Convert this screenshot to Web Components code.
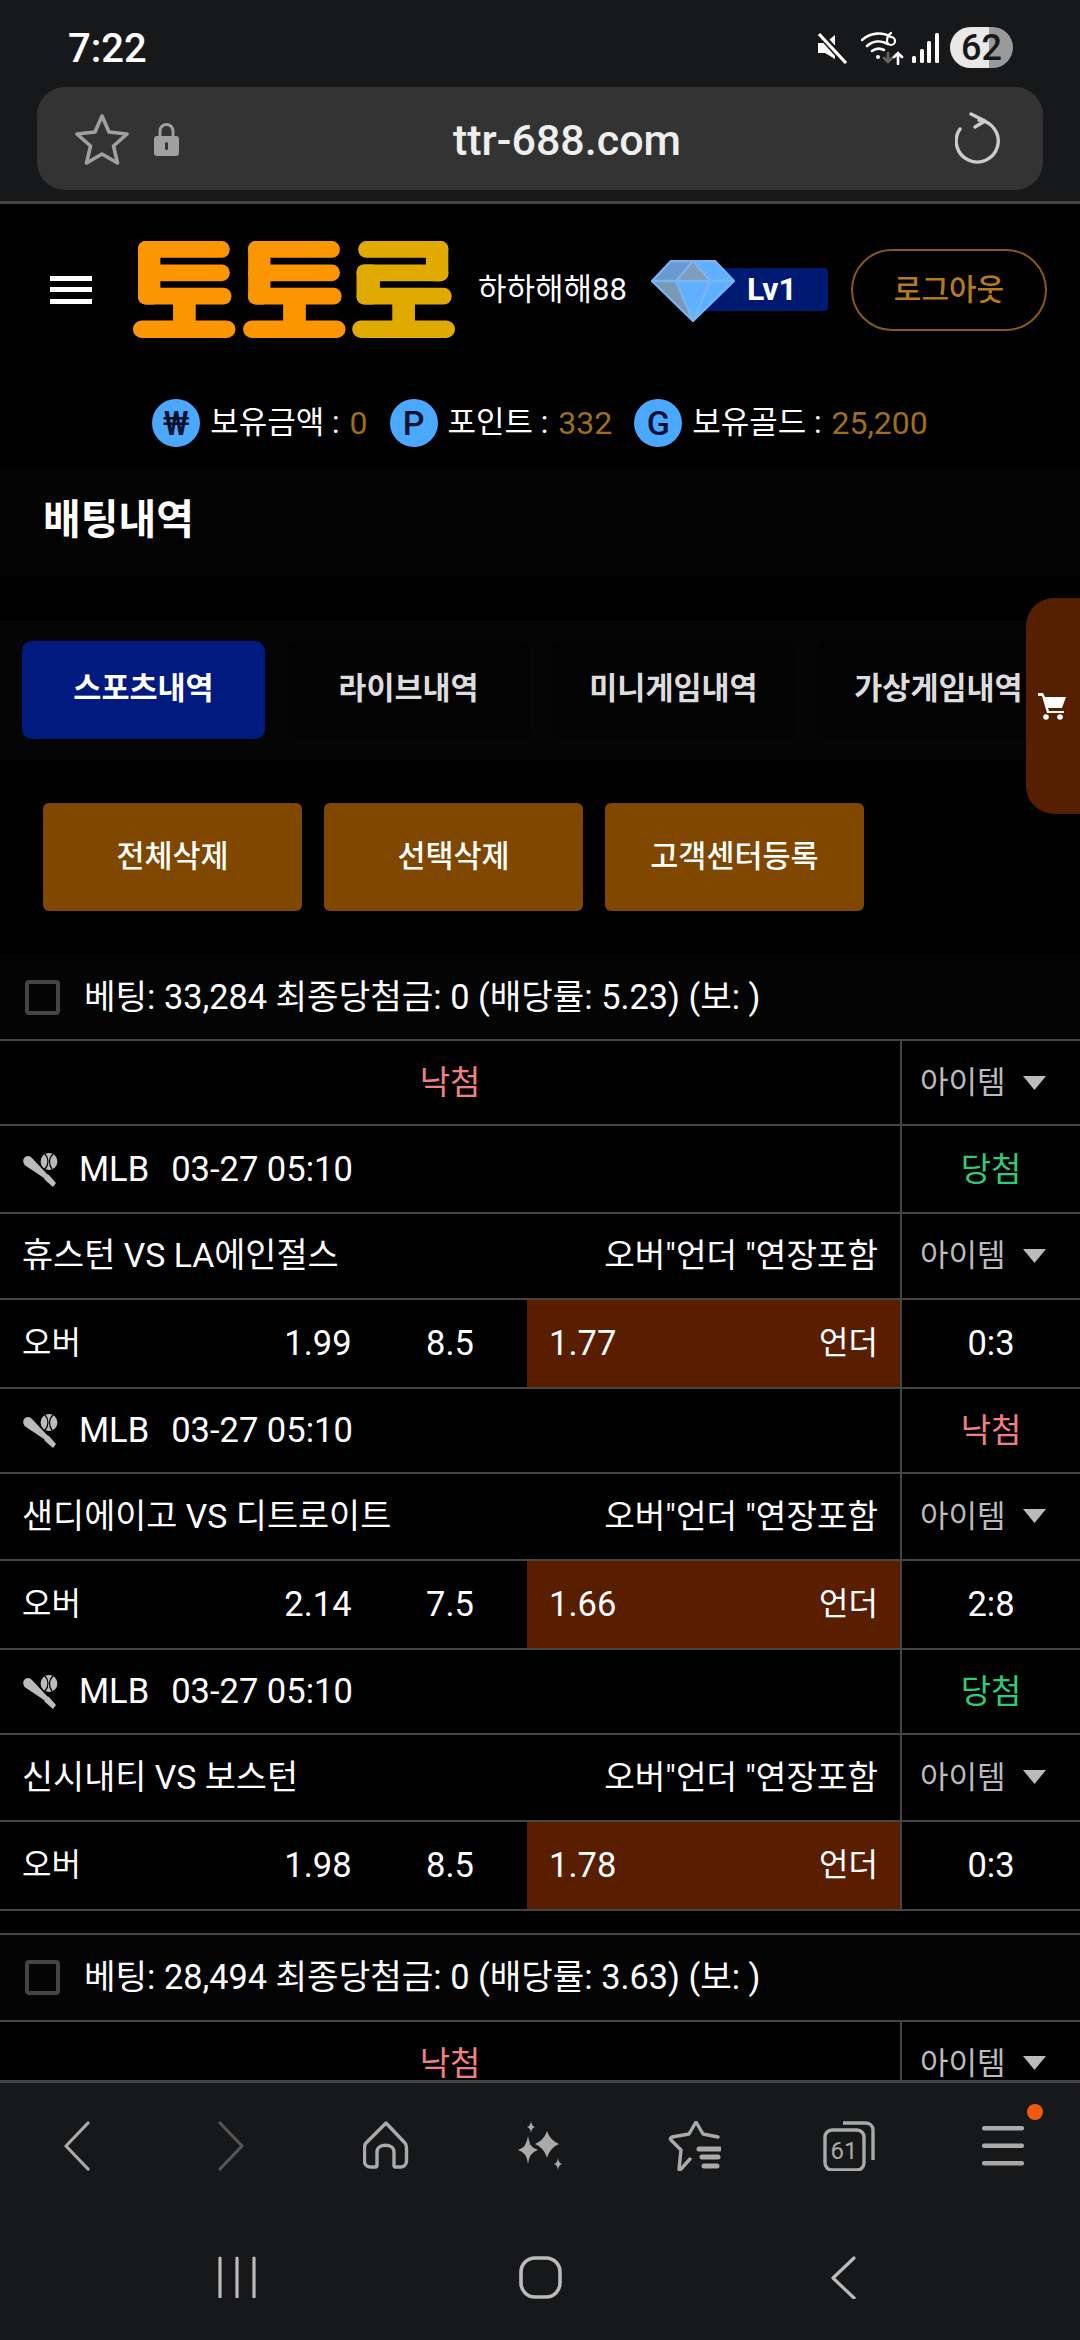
<!DOCTYPE html>
<html lang="ko">
<head>
<meta charset="utf-8">
<title>배팅내역</title>
<style>
  html, body { margin: 0; height: 2340px; overflow: hidden; background: #000; }
  body {
    display: flex;
    flex-direction: column;
    width: 1080px;
    position: relative;
    color: #fff;
    font-family: Roboto, "Noto Sans CJK KR", sans-serif;
  }
  #content { flex: 1; min-height: 0; overflow: hidden; display: block; }
</style>
</head>
<body>
<phone-status></phone-status>
<url-bar></url-bar>
<div id="content">
  <site-header></site-header>
  <balance-row></balance-row>
  <page-title>배팅내역</page-title>
  <tab-row></tab-row>
  <action-row></action-row>
  <bet-summary>베팅: 33,284 최종당첨금: 0 (배당률: 5.23) (보: )</bet-summary>
  <result-row result="낙첨"></result-row>
  <match-block first result="당첨" teams="휴스턴 VS LA에인절스" over="1.99" line="8.5" under="1.77" score="0:3"></match-block>
  <match-block result="낙첨" teams="샌디에이고 VS 디트로이트" over="2.14" line="7.5" under="1.66" score="2:8"></match-block>
  <match-block result="당첨" teams="신시내티 VS 보스턴" over="1.98" line="8.5" under="1.78" score="0:3"></match-block>
  <bet-summary second>베팅: 28,494 최종당첨금: 0 (배당률: 3.63) (보: )</bet-summary>
  <result-row result="낙첨"></result-row>
</div>
<cart-tab></cart-tab>
<browser-nav></browser-nav>
<system-nav></system-nav>

<script>
"use strict";
const KR = 'Roboto, "Noto Sans CJK KR", sans-serif';

class PhoneStatus extends HTMLElement {
  constructor() {
    super();
    this.attachShadow({mode: 'open'}).innerHTML = `
      <style>
        :host { display: flex; align-items: center; height: 87px; box-sizing: border-box; padding: 8px 67px 0 68px; background: #17181a; flex: none; }
        .time { font: 500 40px/1 ${KR}; color: #fff; flex: 1; padding-top: 2px; }
        svg { display: block; flex: none; }
        .battery { width: 63px; height: 41px; border-radius: 21px; margin-left: 11px; display: flex; align-items: center; justify-content: center;
          background: linear-gradient(90deg, #e8e8e8 0 39px, #9a9a9a 39px); color: #17181a; font: 500 36px/1 ${KR}; }
      </style>
      <div class="time">7:22</div>
      <svg width="32" height="32" viewBox="0 0 32 32" style="margin-right:13px">
        <path d="M2 11h7l10-8v24l-10-6H2z" fill="#fff"/>
        <path d="M3 1l27 30" stroke="#17181a" stroke-width="7"/>
        <path d="M3 2l27 29" stroke="#fff" stroke-width="3.2"/>
      </svg>
      <svg width="46" height="34" viewBox="0 0 46 34" fill="none" stroke="#fff" stroke-width="2.6" stroke-linecap="round" style="margin-right:5px">
        <path d="M1 9c9-8 21-8 29-3"/><path d="M6 15c6-5 14-6 21-2"/><path d="M11 20c4-3 8-3 12-1"/>
        <circle cx="17" cy="26" r="2" fill="#fff" stroke="none"/>
        <path d="M30 2c-3 2-4 5-4 8a4 4 0 1 0 4-4" stroke-width="2.2"/>
        <path d="M27 22v9m-4-4l4 4 4-4" stroke="#666"/>
        <path d="M37 33v-11m-4 4l4-4 4 4"/>
      </svg>
      <svg width="27" height="30" viewBox="0 0 27 30" fill="#fff">
        <rect x="0" y="23" width="4" height="7" rx="1.5"/><rect x="8" y="16" width="4" height="14" rx="1.5"/>
        <rect x="15" y="8" width="4" height="22" rx="1.5"/><rect x="23" y="0" width="4" height="30" rx="1.5"/>
      </svg>
      <div class="battery">62</div>`;
  }
}

class UrlBar extends HTMLElement {
  constructor() {
    super();
    this.attachShadow({mode: 'open'}).innerHTML = `
      <style>
        :host { display: block; background: #17181a; padding: 0 37px 11px; border-bottom: 3px solid #444; flex: none; }
        .bar { height: 103px; border-radius: 28px; background: #333; display: flex; align-items: center; padding: 0 42px 0 38px; }
        .host { flex: 1; text-align: center; font: 500 43px/1 ${KR}; color: #eee; padding-top: 4px; }
        svg { display: block; flex: none; }
      </style>
      <div class="bar">
        <svg width="54" height="52" viewBox="0 0 54 52" fill="none" stroke="#a0a0a0" stroke-width="3.6" stroke-linejoin="round"><path d="M27 3l7 16 18 2-13.500 12 4 17-15.500-9-15.500 9 4-17L2 21l18-2z"/></svg>
        <svg width="25" height="34" viewBox="0 0 25 34" style="margin-left:25px"><path d="M6 15V9a6.500 6.500 0 0 1 13 0v6" fill="none" stroke="#a0a0a0" stroke-width="3"/><rect y="14" width="25" height="20" rx="3" fill="#a0a0a0"/><rect x="11" y="20" width="3" height="8" rx="1.500" fill="#333"/></svg>
        <div class="host">ttr-688.com</div>
        <svg width="46" height="54" viewBox="0 0 46 54" fill="none" stroke="#ccc" stroke-width="3.4" stroke-linecap="round" stroke-linejoin="round"><path d="M24 8.100A21 21 0 1 1 5 17"/><path d="M16 2l14 7-10 6"/></svg>
      </div>`;
  }
}

class SiteHeader extends HTMLElement {
  constructor() {
    super();
    this.attachShadow({mode: 'open'}).innerHTML = `
      <style>
        :host { display: flex; align-items: center; height: 171px; box-sizing: border-box; padding: 0 33px 0 50px; background: #000; }
        .burger { width: 42px; height: 28px; flex: none; display: flex; flex-direction: column; justify-content: space-between; }
        .burger i { display: block; height: 5px; background: #fff; }
        .logo { display: block; flex: none; margin-left: 41px; }
        .user { margin-left: 23px; font: 400 31px/1 ${KR}; color: #fff; flex: none; }
        .level { margin-left: 24px; width: 177px; height: 62px; flex: none; position: relative; top: 1px; }
        .level .bar { position: absolute; left: 50px; top: 8px; right: 0; height: 43px; background: #001a72; border-radius: 4px; box-sizing: border-box;
          font: 700 32px/43px ${KR}; color: #fff; padding-left: 46px; }
        .level svg { position: absolute; left: 0; top: 0; }
        .logout { margin-left: auto; width: 196px; height: 82px; box-sizing: border-box; border: 2px solid #8a5a14; border-radius: 41px; flex: none;
          display: flex; align-items: center; justify-content: center; font: 500 30px/1 ${KR}; color: #b57a1a; }
      </style>
      <div class="burger"><i></i><i></i><i></i></div>
      <svg class="logo" width="322" height="97" viewBox="40 65 965 290" role="img" aria-label="토토로 로고">
        <g fill="#fb9600" id="a">
          <rect x="55" y="65" width="275" height="50" rx="24"/><rect x="55" y="135" width="275" height="50" rx="24"/><rect x="55" y="205" width="280" height="50" rx="24"/>
          <rect x="55" y="65" width="67" height="190" rx="22"/><rect x="160" y="250" width="68" height="60"/><rect x="40" y="303" width="307" height="52" rx="26"/>
          <rect x="385" y="65" width="275" height="50" rx="24"/><rect x="385" y="135" width="275" height="50" rx="24"/><rect x="385" y="205" width="280" height="50" rx="24"/>
          <rect x="385" y="65" width="67" height="190" rx="22"/><rect x="490" y="250" width="68" height="60"/><rect x="370" y="303" width="307" height="52" rx="26"/>
        </g>
        <g fill="#e0aa00">
          <rect x="715" y="65" width="270" height="50" rx="24"/><rect x="918" y="65" width="67" height="120" rx="22"/><rect x="710" y="135" width="275" height="50" rx="24"/>
          <rect x="710" y="135" width="70" height="120" rx="22"/><rect x="710" y="205" width="285" height="50" rx="24"/><rect x="817" y="250" width="68" height="60"/><rect x="697" y="303" width="308" height="52" rx="26"/>
        </g>
      </svg>
      <div class="user">하하해해88</div>
      <div class="level">
        <div class="bar">Lv1</div>
        <svg width="84" height="62" viewBox="0 0 84 62">
          <path d="M20 1h44l19 20-41 40L1 21z" fill="#5fb0ff"/>
          <path d="M20 1L1 21h24L42 1z" fill="#6a9ad0"/>
          <path d="M42 1L25 21h34z" fill="#7f9cbc"/>
          <path d="M1 21h24l17 40z" fill="#7a98b8"/>
          <path d="M20 1h44l19 20-41 40L1 21zM1 21h82M25 21L42 1l17 20M25 21l17 40 17-40" fill="none" stroke="#79b5ee" stroke-width="2.400" stroke-linejoin="round"/>
        </svg>
      </div>
      <div class="logout">로그아웃</div>`;
  }
}

class BalanceRow extends HTMLElement {
  constructor() {
    super();
    this.attachShadow({mode: 'open'}).innerHTML = `
      <style>
        :host { display: flex; align-items: center; justify-content: center; height: 93px; padding-top: 2px; box-sizing: border-box; background: #000; font: 400 31px/1 ${KR}; color: #fff; }
        .dot { width: 48px; height: 48px; border-radius: 50%; background: #4aa9ff; color: #001030; font: 500 34px/48px ${KR}; text-align: center; margin-right: 10px; flex: none; }
        b { font-weight: 400; font-size: 32px; color: #9e6f14; margin-left: 10px; }
        .item { display: flex; align-items: center; margin-right: 22px; }
        .item:last-child { margin-right: 0; }
      </style>
      <div class="item"><span class="dot">₩</span><span>보유금액 :</span><b>0</b></div>
      <div class="item"><span class="dot">P</span><span>포인트 :</span><b>332</b></div>
      <div class="item"><span class="dot">G</span><span>보유골드 :</span><b>25,200</b></div>`;
  }
}

class PageTitle extends HTMLElement {
  constructor() {
    super();
    this.attachShadow({mode: 'open'}).innerHTML = `
      <style>
        :host { display: flex; align-items: center; height: 109px; box-sizing: border-box; padding: 0 0 5px 43px; background: #030303; font: 700 41px/1 ${KR}; color: #fff; }
      </style>
      <slot></slot>`;
  }
}

class TabRow extends HTMLElement {
  constructor() {
    super();
    this.attachShadow({mode: 'open'}).innerHTML = `
      <style>
        :host { display: flex; gap: 22px; height: 140px; box-sizing: border-box; margin-top: 43px; padding: 21px 0 21px 22px; background: #050505; overflow: hidden; }
        div { flex: none; width: 243px; height: 98px; box-sizing: border-box; border-radius: 10px; background: #030303; color: #ddd;
          display: flex; align-items: center; justify-content: center; font: 700 30.500px/1 ${KR}; padding-bottom: 2px; }
        .on { background: #001a80; color: #fff; }
      </style>
      <div class="on">스포츠내역</div><div>라이브내역</div><div>미니게임내역</div><div>가상게임내역</div>`;
  }
}

class ActionRow extends HTMLElement {
  constructor() {
    super();
    this.attachShadow({mode: 'open'}).innerHTML = `
      <style>
        :host { display: flex; gap: 22px; padding: 43px 0 44px 43px; background: #000; }
        div { width: 259px; height: 108px; border-radius: 6px; background: #7f4700; color: #fff; display: flex; align-items: center; justify-content: center; font: 500 30.500px/1 ${KR}; }
      </style>
      <div>전체삭제</div><div>선택삭제</div><div>고객센터등록</div>`;
  }
}

class BetSummary extends HTMLElement {
  constructor() {
    super();
    this.attachShadow({mode: 'open'}).innerHTML = `
      <style>
        :host { display: flex; align-items: center; height: 86px; box-sizing: border-box; padding-left: 25px; background: #040404; font: 400 34.300px/1 ${KR}; color: #fff; border-bottom: 2px solid #454545; }
        :host([second]) { margin-top: 22px; height: 89px; border-top: 2px solid #454545; }
        i { display: block; width: 35px; height: 35px; box-sizing: border-box; border: 4px solid #444; border-radius: 4px; margin-right: 24px; flex: none; }
      </style>
      <i></i><span><slot></slot></span>`;
  }
}

const itemCell = `<div class="side item">아이템<svg width="23" height="14" viewBox="0 0 23 14"><path d="M0 0h23L11.500 14z" fill="#bbb"/></svg></div>`;
const rowStyle = `
  .row { display: grid; grid-template-columns: 900px 1fr; height: 87px; box-sizing: border-box; border-bottom: 2px solid #454545; font: 400 34.500px/1 ${KR}; color: #fff; }
  .main { display: flex; align-items: center; min-width: 0; }
  .side { border-left: 2px solid #454545; display: flex; align-items: center; justify-content: center; }
  .item { color: #bbb; font-size: 31px; gap: 17px; justify-content: flex-start; padding-left: 18px; }
  .win { color: #2ecc71; font-size: 33px; }
  .lose { color: #f08080; font-size: 33px; }
`;
const resultClass = r => (r === '당첨' ? 'win' : 'lose');

class ResultRow extends HTMLElement {
  constructor() {
    super();
    const result = this.getAttribute('result');
    this.attachShadow({mode: 'open'}).innerHTML = `
      <style>
        :host { display: block; background: #000; }
        ${rowStyle}
        .row { height: 85.300px; }
        .main { justify-content: center; }
      </style>
      <div class="row"><div class="main ${resultClass(result)}">${result}</div>${itemCell}</div>`;
  }
}

class MatchBlock extends HTMLElement {
  constructor() {
    super();
    const a = n => this.getAttribute(n);
    this.attachShadow({mode: 'open'}).innerHTML = `
      <style>
        :host { display: block; background: #000; }
        ${rowStyle}
        .r1 { height: 85.300px; }
        .r3 { height: 88.700px; }
        :host([first]) .r1 { height: 87.700px; }
        :host([first]) .r2 { height: 86px; }
        .league { padding-left: 22px; }
        .league svg { margin-right: 21px; }
        .league span { margin-right: 22px; }
        .teams { padding: 0 22px; justify-content: space-between; font-size: 33.800px; }
        .teams span + span { font-size: 33.200px; }
        .odds { display: grid; grid-template-columns: 263px 110px 154px 1fr; align-items: stretch; }
        .odds > div { display: flex; align-items: center; justify-content: center; }
        .odds .l { justify-content: flex-start; padding-left: 22px; font-size: 32px; }
        .odds .under { justify-content: space-between; padding: 0 22px; background: #591e00; }
        .under span + span { font-size: 32px; }
      </style>
      <div class="row r1">
        <div class="main league">
          <svg width="36" height="37" viewBox="0 0 36 37">
            <path d="M2 7a5 5 0 0 1 8 0L25 23l2 1 7 8-3 4-8-7-1-2L4 15a6 6 0 0 1-2-8z" fill="#bbb"/>
            <circle cx="27" cy="10.500" r="8.400" fill="#bbb"/>
            <path d="M23 3a11 11 0 0 1 0 15M31 3a11 11 0 0 0-1 15" fill="none" stroke="#000" stroke-width="1.200"/>
          </svg>
          <span>MLB</span>03-27 05:10
        </div>
        <div class="side ${resultClass(a('result'))}">${a('result')}</div>
      </div>
      <div class="row r2">
        <div class="main teams"><span>${a('teams')}</span><span>오버"언더 "연장포함</span></div>
        ${itemCell}
      </div>
      <div class="row r3">
        <div class="main odds">
          <div class="l">오버</div><div>${a('over')}</div><div>${a('line')}</div>
          <div class="under"><span>${a('under')}</span><span>언더</span></div>
        </div>
        <div class="side">${a('score')}</div>
      </div>`;
  }
}

class CartTab extends HTMLElement {
  constructor() {
    super();
    this.attachShadow({mode: 'open'}).innerHTML = `
      <style>
        :host { position: absolute; right: 0; top: 598px; width: 54px; height: 216px; box-sizing: border-box; background: #551f00; border-radius: 28px 0 0 28px; padding: 94px 0 0 12px; }
        svg { display: block; }
      </style>
      <svg width="28" height="28" viewBox="0 0 28 28" fill="#fff">
        <path d="M0 1h5l2 4h21l-4 11H10l1 3h15v2H9L4 4H0z"/>
        <circle cx="8" cy="25" r="2.800"/><circle cx="22" cy="25" r="2.800"/>
      </svg>`;
  }
}

class BrowserNav extends HTMLElement {
  constructor() {
    super();
    this.attachShadow({mode: 'open'}).innerHTML = `
      <style>
        :host { display: grid; grid-template-columns: repeat(7, 1fr); height: 167px; box-sizing: border-box; padding-top: 38px; background: #17181a; border-top: 3px solid #444; flex: none; position: relative; align-items: start; justify-items: center; }
        svg { display: block; }
        .tabs { position: relative; width: 52px; height: 50px; }
        .tabs span { position: absolute; left: 2px; top: 9px; width: 39px; height: 40px; text-align: center; font: 400 24px/42px ${KR}; color: #aaa; }
        .dot { position: absolute; left: 1027px; top: 21px; width: 16px; height: 16px; border-radius: 50%; background: #f15a12; }
      </style>
      <svg width="28" height="50" viewBox="0 0 28 50" fill="none" stroke="#aaa" stroke-width="3.200" stroke-linecap="round" stroke-linejoin="round"><path d="M25 2L3 25l22 23"/></svg>
      <svg width="28" height="50" viewBox="0 0 28 50" fill="none" stroke="#555" stroke-width="3.200" stroke-linecap="round" stroke-linejoin="round"><path d="M3 2l22 23L3 48"/></svg>
      <svg width="46" height="48" viewBox="0 0 46 48" fill="none" stroke="#aaa" stroke-width="3.400" stroke-linejoin="round"><path d="M23 2L3 22c-1 1-1.500 3-1.500 5v13c0 4 3 6 6 6h5c1 0 1.500-1 1.500-2V31c0-9 17-9 17 0v13c0 1 .5 2 1.500 2h5c3 0 6-2 6-6V27c0-2-.5-4-1.500-5z"/></svg>
      <svg width="46" height="50" viewBox="0 0 46 50" fill="#aaa">
        <path d="M11 15Q12.500 27 21 29Q12.500 31 11 43Q9.500 31 1 29Q9.500 27 11 15z"/>
        <path d="M30 5Q32 19 45 23Q32 27 30 42Q28 27 15 23Q28 19 30 5z" stroke="#17181a" stroke-width="2"/>
        <path d="M14 0Q14.500 5 18 6Q14.500 7 14 12Q13.500 7 10 6Q13.500 5 14 0z"/>
        <path d="M41 37Q41.500 42 45 43Q41.500 44 41 49Q40.500 44 37 43Q40.500 42 41 37z"/>
      </svg>
      <svg width="53" height="50" viewBox="0 0 53 50" fill="none" stroke="#aaa" stroke-width="3.400" stroke-linejoin="round" stroke-linecap="round">
        <path d="M50 16l-15-3-7-12-7 12-17 3c-2 1-2 2-1 3l10 10-2 19c0 1 1 1 2 0l9-10"/>
        <path d="M31 28h21M34 36h16M36 45h13" stroke-width="5"/>
      </svg>
      <div class="tabs">
        <svg width="52" height="50" viewBox="0 0 52 50" fill="none" stroke="#aaa" stroke-width="3.400"><path d="M20 2h22c5 0 8 3 8 7v30"/><rect x="2" y="9" width="39" height="40" rx="7"/></svg>
        <span>61</span>
      </div>
      <svg width="42" height="40" viewBox="0 0 42 40" style="margin-top:5px" fill="#aaa"><rect y="0" width="42" height="4.500" rx="2"/><rect y="17.500" width="42" height="4.500" rx="2"/><rect y="35" width="42" height="4.500" rx="2"/></svg>
      <i class="dot"></i>`;
  }
}

class SystemNav extends HTMLElement {
  constructor() {
    super();
    this.attachShadow({mode: 'open'}).innerHTML = `
      <style>
        :host { display: grid; grid-template-columns: repeat(3, 303px); justify-content: center; height: 93px; box-sizing: border-box; background: #17181a; flex: none; align-items: start; justify-items: center; padding-top: 9px; }
        svg { display: block; }
      </style>
      <svg width="40" height="42" viewBox="0 0 40 42" fill="none" stroke="#bbb" stroke-width="3.200" stroke-linecap="round"><path d="M3 2v39M20 2v39M37 2v39"/></svg>
      <svg width="43" height="43" viewBox="0 0 43 43" fill="none" stroke="#bbb" stroke-width="3.600"><rect x="2" y="2" width="39" height="39" rx="14"/></svg>
      <svg width="26" height="43" viewBox="0 0 26 43" fill="none" stroke="#bbb" stroke-width="3.200" stroke-linecap="round" stroke-linejoin="round"><path d="M24 2L3 22l21 20"/></svg>`;
  }
}

customElements.define('phone-status', PhoneStatus);
customElements.define('url-bar', UrlBar);
customElements.define('site-header', SiteHeader);
customElements.define('balance-row', BalanceRow);
customElements.define('page-title', PageTitle);
customElements.define('tab-row', TabRow);
customElements.define('action-row', ActionRow);
customElements.define('bet-summary', BetSummary);
customElements.define('result-row', ResultRow);
customElements.define('match-block', MatchBlock);
customElements.define('cart-tab', CartTab);
customElements.define('browser-nav', BrowserNav);
customElements.define('system-nav', SystemNav);
</script>
</body>
</html>
